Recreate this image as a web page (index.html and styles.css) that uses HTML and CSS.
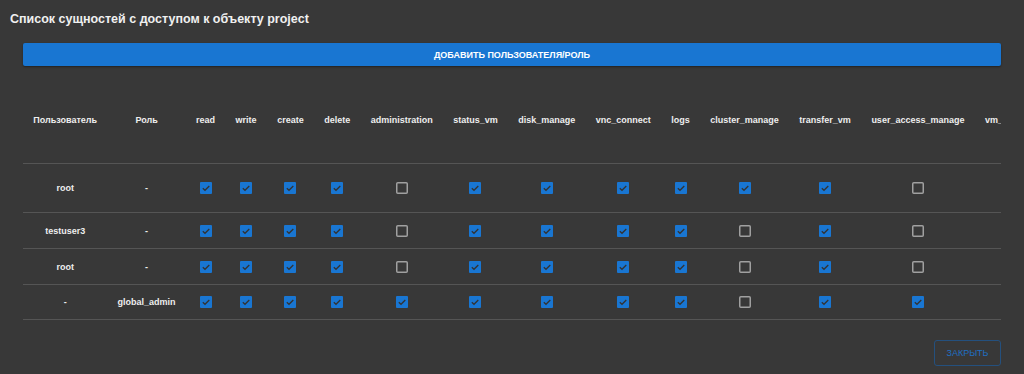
FILE: index.html
```
<!DOCTYPE html>
<html lang="ru">
<head>
    <meta charset="UTF-8">
    <meta name="viewport" content="width=device-width, initial-scale=1.0">
    <title>Доступ к объекту</title>
    <link rel="stylesheet" href="styles.css">
</head>
<body>

<div class="dialog">
    <h2 class="dialog-title">Список сущностей с доступом к объекту project</h2>

    <div class="dialog-content">
        <button class="add-button">ДОБАВИТЬ ПОЛЬЗОВАТЕЛЯ/РОЛЬ</button>

        <div class="table-wrap">
            <table class="access-table" id="access-table">
                <thead>
                    <tr id="head-row"></tr>
                </thead>
                <tbody id="body-rows"></tbody>
            </table>
        </div>
    </div>

    <div class="dialog-actions">
        <button class="close-button">ЗАКРЫТЬ</button>
    </div>
</div>

<script>
    const perms = ['read', 'write', 'create', 'delete', 'administration', 'status_vm', 'disk_manage',
        'vnc_connect', 'logs', 'cluster_manage', 'transfer_vm', 'user_access_manage', 'vm_manage'];

    const rows = [
        { user: 'root', role: '-', checks: [1, 1, 1, 1, 0, 1, 1, 1, 1, 1, 1, 0, 1] },
        { user: 'testuser3', role: '-', checks: [1, 1, 1, 1, 0, 1, 1, 1, 1, 0, 1, 0, 1] },
        { user: 'root', role: '-', checks: [1, 1, 1, 1, 0, 1, 1, 1, 1, 0, 1, 0, 1] },
        { user: '-', role: 'global_admin', checks: [1, 1, 1, 1, 1, 1, 1, 1, 1, 0, 1, 1, 1] }
    ];

    const checkedSvg = '<svg width="12" height="12" viewBox="0 0 12 12"><rect width="12" height="12" rx="1" fill="#1976d2"/>' +
        '<path d="M2.8 6.2 L5 8.3 L9.3 4" fill="none" stroke="#333" stroke-width="1.3"/></svg>';
    const emptySvg = '<svg width="12" height="12" viewBox="0 0 12 12"><rect x="0.75" y="0.75" width="10.5" height="10.5" rx="1" fill="none" stroke="#a0a0a0" stroke-width="1.5"/></svg>';

    const headRow = document.getElementById('head-row');
    ['Пользователь', 'Роль'].concat(perms).forEach((name) => {
        const th = document.createElement('th');
        th.textContent = name;
        headRow.appendChild(th);
    });

    const body = document.getElementById('body-rows');
    rows.forEach((row) => {
        const tr = document.createElement('tr');
        let html = '<td>' + row.user + '</td><td>' + row.role + '</td>';
        row.checks.forEach((c) => {
            html += '<td><span class="cb">' + (c ? checkedSvg : emptySvg) + '</span></td>';
        });
        tr.innerHTML = html;
        body.appendChild(tr);
    });
</script>

</body>
</html>
```

FILE: styles.css
```
body {
    margin: 0;
    background-color: #383838;
    font-family: "Liberation Sans", Arial, sans-serif;
    color: #eeeeee;
}
.dialog {
    width: 1024px;
    height: 374px;
    overflow: hidden;
}
.dialog-title {
    margin: 0;
    padding: 11px 10px 0;
    font-size: 12.5px;
    font-weight: bold;
    line-height: 16px;
    color: #f0f0f0;
}
.dialog-content {
    padding: 16px 23px 0;
}
.add-button {
    display: block;
    width: 100%;
    height: 23px;
    border: none;
    border-radius: 2px;
    background-color: #1976d2;
    color: #fff;
    font-family: inherit;
    font-size: 9px;
    font-weight: bold;
    box-shadow: 0 1px 2px rgba(0, 0, 0, 0.4);
}
.table-wrap {
    margin-top: 11px;
    overflow: hidden;
}
.access-table {
    border-collapse: collapse;
    white-space: nowrap;
    font-size: 9px;
    font-weight: bold;
}
.access-table th,
.access-table td {
    padding: 0 10.25px;
    text-align: center;
    vertical-align: middle;
    border-bottom: 1px solid #555555;
}
.access-table th {
    height: 86px;
    color: #eeeeee;
}
.access-table td {
    height: 35px;
}
.access-table tbody tr:first-child td {
    height: 48px;
}
.access-table tbody tr:last-child td {
    height: 34px;
}
.cb {
    display: inline-block;
    width: 12px;
    height: 12px;
    vertical-align: middle;
}
.cb svg {
    display: block;
}
.dialog-actions {
    display: flex;
    justify-content: flex-end;
    padding: 20px 23px 0;
}
.close-button {
    width: 67px;
    height: 26px;
    background: transparent;
    border: 1px solid #24507e;
    border-radius: 3px;
    color: #1f6fc2;
    font-family: inherit;
    font-size: 9px;
}
```
